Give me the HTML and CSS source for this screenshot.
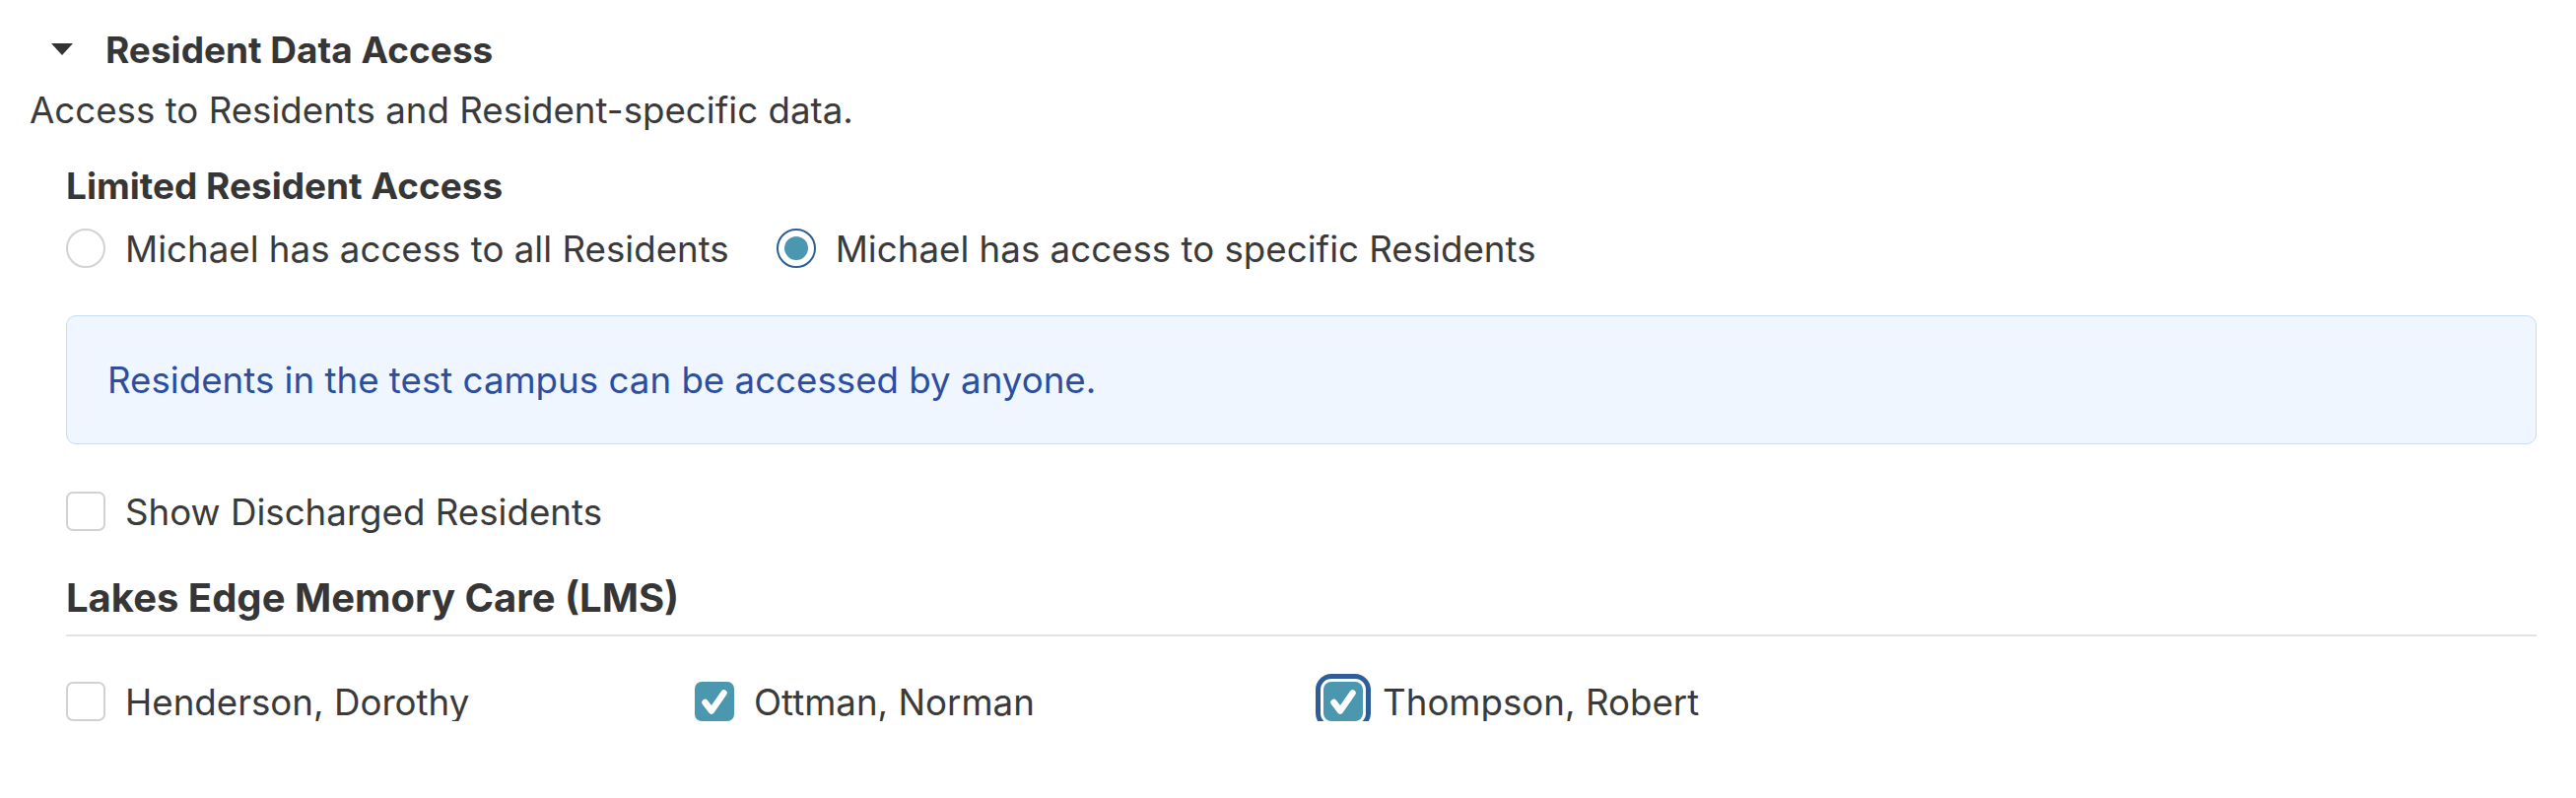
FILE: index.html
```html
<!DOCTYPE html>
<html lang="en">
<head>
<meta charset="utf-8">
<title>Resident Data Access</title>
<link rel="stylesheet" href="styles.css">
</head>
<body>
<div class="panel">
  <div class="summary">
    <span class="caret"></span>
    <span class="summary-title">Resident Data Access</span>
  </div>
  <p class="desc">Access to Residents and Resident-specific data.</p>

  <div class="section">
    <h3 class="label">Limited Resident Access</h3>
    <div class="radio-row">
      <label class="option">
        <span class="radio"></span>
        <span class="option-text">Michael has access to all Residents</span>
      </label>
      <label class="option">
        <span class="radio radio-on"><span class="dot"></span></span>
        <span class="option-text">Michael has access to specific Residents</span>
      </label>
    </div>

    <div class="info">Residents in the test campus can be accessed by anyone.</div>

    <label class="option discharged">
      <span class="box"></span>
      <span class="option-text">Show Discharged Residents</span>
    </label>

    <h3 class="campus">Lakes Edge Memory Care (LMS)</h3>

    <div class="residents">
      <label class="option">
        <span class="box"></span>
        <span class="option-text">Henderson, Dorothy</span>
      </label>
      <label class="option">
        <span class="box box-on"><svg viewBox="0 0 40 40" width="40" height="40"><polyline points="10.5,21 17,29.5 29.5,11.5" fill="none" stroke="#fff" stroke-width="6.5" stroke-linecap="round" stroke-linejoin="round"/></svg></span>
        <span class="option-text">Ottman, Norman</span>
      </label>
      <label class="option">
        <span class="box box-on box-focus"><svg viewBox="0 0 40 40" width="40" height="40"><polyline points="10.5,21 17,29.5 29.5,11.5" fill="none" stroke="#fff" stroke-width="6.5" stroke-linecap="round" stroke-linejoin="round"/></svg></span>
        <span class="option-text">Thompson, Robert</span>
      </label>
    </div>
  </div>
</div>
</body>
</html>
```

FILE: styles.css
```css
html, body {
  margin: 0;
  padding: 0;
  background: #ffffff;
}

body {
  font-family: Inter, "Noto Sans", "Liberation Sans", sans-serif;
  font-size: 36.7px;
  color: #3a3a3a;
}

.panel {
  padding: 20px 40px 0 30px;
}

.summary {
  display: flex;
  align-items: center;
  height: 60px;
  padding-left: 22px;
  gap: 33px;
}

.caret {
  width: 0;
  height: 0;
  border-left: 11px solid transparent;
  border-right: 11px solid transparent;
  border-top: 12px solid #333333;
}

.summary-title {
  font-weight: 700;
  font-size: 37px;
  color: #363636;
}

.desc {
  margin: 9px 0 0 0;
  line-height: 46px;
}

.section {
  padding-left: 37px;
}

.label {
  margin: 29px 0 0 0;
  font-size: 37px;
  font-weight: 700;
  line-height: 50px;
  color: #363636;
}

.radio-row {
  display: flex;
  margin-top: 18px;
  gap: 48px;
}

.option {
  display: flex;
  align-items: center;
  gap: 20px;
  height: 40px;
}

.radio {
  box-sizing: border-box;
  width: 40px;
  height: 40px;
  border-radius: 50%;
  border: 2px solid #d2d2d2;
  background: #fff;
  display: flex;
  align-items: center;
  justify-content: center;
  flex: none;
}

.radio-on {
  border: 2.5px solid #2d5e97;
}

.dot {
  width: 24px;
  height: 24px;
  border-radius: 50%;
  background: #4b97b0;
}

.info {
  margin-top: 48px;
  height: 131px;
  box-sizing: border-box;
  border: 1.5px solid #c6ddf4;
  border-radius: 10px;
  background: #eff6ff;
  color: #2c4ea0;
  display: flex;
  align-items: center;
  padding-left: 41px;
}

.discharged {
  margin-top: 48px;
}

.box {
  box-sizing: border-box;
  width: 40px;
  height: 40px;
  border-radius: 7px;
  border: 2px solid #d2d2d2;
  background: #fff;
  flex: none;
  display: flex;
  align-items: center;
  justify-content: center;
}

.box-on {
  border: none;
  background: #4b97b0;
}

.box-focus {
  box-shadow: 0 0 0 3px #ffffff, 0 0 0 8px #2d5e97;
  border-radius: 8px;
}

.campus {
  margin: 43px 0 0 0;
  font-size: 40px;
  font-weight: 700;
  line-height: 50px;
  color: #363636;
  padding-bottom: 12px;
  border-bottom: 2px solid #e3e3e3;
}

.residents {
  display: grid;
  grid-template-columns: 638px 638px 638px;
  margin-top: 46px;
}
```
